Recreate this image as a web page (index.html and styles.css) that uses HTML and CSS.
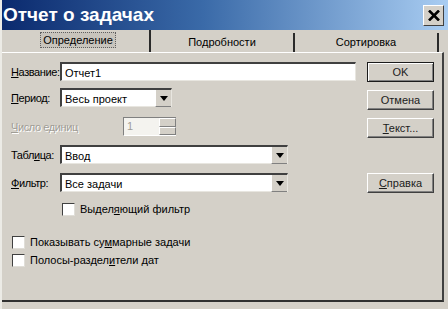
FILE: index.html
```html
<!DOCTYPE html>
<html lang="ru">
<head>
    <meta charset="UTF-8">
    <title>Отчет о задачах</title>
    <link rel="stylesheet" href="styles.css">
</head>
<body>
    <div class="window">
        <div class="titlebar">
            <span class="title">Отчет о задачах</span>
            <button class="close">
                <svg width="12" height="11" viewBox="0 0 12 11"><path d="M1 0.5 L11 10.5 M11 0.5 L1 10.5" stroke="#000" stroke-width="2.6"/></svg>
            </button>
        </div>

        <div class="tabs">
            <div class="tab active"><span class="focus">Определение</span></div>
            <div class="tab">Подробности</div>
            <div class="tab">Сортировка</div>
        </div>

        <div class="panel">
            <div class="form">
                <div class="row row-name">
                    <label><u>Н</u>азвание:</label>
                    <div class="field wide">Отчет1</div>
                </div>
                <div class="row row-period">
                    <label><u>П</u>ериод:</label>
                    <div class="field select short">Весь проект<span class="drop"></span></div>
                </div>
                <div class="row row-units disabled">
                    <label><u>Ч</u>исло единиц</label>
                    <div class="spin">
                        <div class="spin-field">1</div>
                        <div class="spin-btns"><span></span><span></span></div>
                    </div>
                </div>
                <div class="row row-table">
                    <label>Табл<u>и</u>ца:</label>
                    <div class="field select mid">Ввод<span class="drop"></span></div>
                </div>
                <div class="row row-filter">
                    <label><u>Ф</u>ильтр:</label>
                    <div class="field select mid">Все задачи<span class="drop"></span></div>
                </div>
                <div class="check check-inner">
                    <span class="box"></span>Выдел<u>я</u>ющий фильтр
                </div>
                <div class="check check-summary">
                    <span class="box"></span>Показывать су<u>м</u>марные задачи
                </div>
                <div class="check check-dates">
                    <span class="box"></span>Полосы-раздел<u>и</u>тели дат
                </div>
            </div>

            <div class="actions">
                <button class="btn default">OK</button>
                <button class="btn">Отмена</button>
                <button class="btn"><u>Т</u>екст...</button>
                <button class="btn help"><u>С</u>правка</button>
            </div>
        </div>
    </div>
</body>
</html>
```

FILE: styles.css
```css
body {
    margin: 0;
    width: 448px;
    height: 309px;
    overflow: hidden;
    background: #d4d0c8;
    font-family: "Liberation Sans", Arial, sans-serif;
    font-size: 11px;
    color: #000000;
}
u {
    text-decoration: underline;
    text-underline-offset: 1px;
}
.window {
    height: 309px;
    display: flex;
    flex-direction: column;
    border-left: 2px solid #ecebe6;
    box-sizing: border-box;
}
.titlebar {
    height: 30px;
    display: flex;
    align-items: center;
    justify-content: space-between;
    padding: 0 4px 0 1px;
    background: linear-gradient(to right, #0b2a6e 0%, #3a6aa8 45%, #a9cdf2 100%);
}
.title {
    color: #ffffff;
    font-weight: bold;
    font-size: 19px;
    margin-top: -1px;
}
.close {
    width: 21px;
    height: 21px;
    padding: 0;
    display: flex;
    align-items: center;
    justify-content: center;
    background: #d4d0c8;
    border: 1px solid;
    border-color: #ffffff #404040 #404040 #ffffff;
}
/* Вкладки */
.tabs {
    display: flex;
    height: 22px;
    padding: 0 9px 0 5px;
}
.tab {
    flex: 1;
    display: flex;
    align-items: center;
    justify-content: center;
    border-right: 2px solid #2a2a2a;
    margin-top: 3px;
    padding-bottom: 2px;
}
.tab.active {
    margin-top: 0;
}
.focus {
    border: 1px dotted #606060;
    padding: 1px 2px;
    background: #c8c4bc;
}
/* Панель */
.panel {
    flex: 1;
    display: flex;
    justify-content: space-between;
    padding: 9px 8px 0 9px;
    margin: 0 4px 7px 0;
    border-top: 1px solid #ffffff;
    border-right: 2px solid #404040;
    border-bottom: 2px solid #303030;
}
.form {
    display: flex;
    flex-direction: column;
}
.row {
    display: flex;
    align-items: center;
    height: 19px;
}
.row label {
    width: 49px;
    flex-shrink: 0;
    white-space: nowrap;
    letter-spacing: -0.4px;
}
.row-period { margin-top: 7px; }
.row-units { margin-top: 11px; height: 17px; }
.row-table { margin-top: 10px; }
.row-filter { margin-top: 9px; }
.disabled label {
    color: #a09d96;
    text-shadow: 1px 1px 0 #ffffff;
}
.field {
    position: relative;
    height: 19px;
    box-sizing: border-box;
    padding: 2px 3px;
    background: #ffffff;
    border-top: 2px solid #404040;
    border-left: 2px solid #404040;
    border-bottom: 1px solid #e8e6e0;
    border-right: 1px solid #e8e6e0;
    line-height: 14px;
}
.wide { width: 296px; }
.short { width: 112px; }
.mid { width: 228px; }
.drop {
    position: absolute;
    right: 0;
    top: 0;
    width: 15px;
    height: 16px;
    background: #d4d0c8;
    border-left: 1px solid #ffffff;
    border-bottom: 1px solid #808080;
}
.drop::after {
    content: "";
    position: absolute;
    left: 4px;
    top: 6px;
    border-left: 4px solid transparent;
    border-right: 4px solid transparent;
    border-top: 5px solid #000000;
}
.spin {
    display: flex;
    margin-left: 63px;
    height: 17px;
    border-top: 1px solid #808080;
    border-left: 1px solid #808080;
    border-bottom: 1px solid #ffffff;
}
.spin-field {
    width: 29px;
    padding: 1px 3px;
    color: #a09d96;
    background: #f4f3ef;
    line-height: 14px;
}
.spin-btns {
    width: 17px;
    display: flex;
    flex-direction: column;
}
.spin-btns span {
    flex: 1;
    background: #d4d0c8;
    border: 1px solid;
    border-color: #ffffff #808080 #808080 #ffffff;
}
/* Флажки */
.check {
    display: flex;
    align-items: center;
    height: 16px;
}
.check-inner {
    margin: 9px 0 0 51px;
}
.check-summary {
    margin: 17px 0 0 1px;
}
.check-dates {
    margin: 2px 0 0 1px;
}
.box {
    width: 11px;
    height: 11px;
    margin-right: 5px;
    background: #ffffff;
    border-top: 1px solid #404040;
    border-left: 1px solid #404040;
    border-bottom: 1px solid #e0ded8;
    border-right: 1px solid #e0ded8;
}
/* Кнопки */
.actions {
    display: flex;
    flex-direction: column;
    gap: 8px;
}
.btn {
    width: 67px;
    height: 20px;
    padding: 0;
    font-family: inherit;
    font-size: 11px;
    color: #1c1c1c;
    background: #d4d0c8;
    border: 1px solid;
    border-color: #ffffff #404040 #404040 #ffffff;
    box-shadow: inset -1px -1px 0 #808080;
}
.btn.default {
    border: 1px solid #1c1c1c;
    box-shadow: inset 1px 1px 0 #ffffff, inset -1px -1px 0 #808080;
}
.help {
    margin-top: 27px;
}
```
